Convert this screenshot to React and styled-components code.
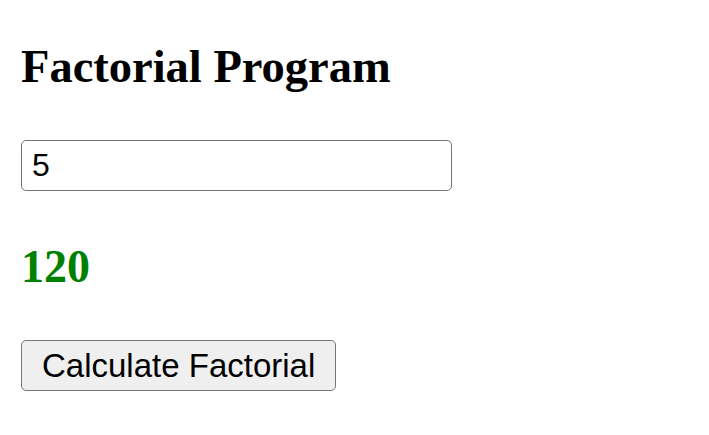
import React, { useState } from 'react'
import styled, { createGlobalStyle } from 'styled-components'

const GlobalStyle = createGlobalStyle`
  html, body {
    margin: 0;
    padding: 0;
    background: #ffffff;
  }
`

const Page = styled.div`
  display: flex;
  flex-direction: column;
  align-items: flex-start;
  padding: 43px 21px 0 21px;
  font-family: "Liberation Serif", "Times New Roman", serif;
`

const Title = styled.h1`
  margin: 0;
  font-size: 46.5px;
  line-height: 47px;
  font-weight: bold;
  color: #000;
`

const NumberInput = styled.input`
  box-sizing: border-box;
  margin-top: 50px;
  width: 431px;
  height: 51px;
  padding: 0 10px;
  border: 1px solid #767676;
  border-radius: 5px;
  font-family: "Liberation Sans", Arial, sans-serif;
  font-size: 32px;
  color: #000;
  background: #fff;
  outline: none;
`

const Result = styled.h2`
  margin: 53px 0 0 0;
  font-size: 46px;
  line-height: 46px;
  font-weight: bold;
  color: ${p => p.color || '#008000'};
`

const Button = styled.button`
  box-sizing: border-box;
  margin-top: 50px;
  height: 51px;
  padding: 0 20px;
  border: 1px solid #767676;
  border-radius: 5px;
  background: #efefef;
  font-family: "Liberation Sans", Arial, sans-serif;
  font-size: 33px;
  color: #000;
`

const factorial = n => {
  let r = 1
  for (let i = 2; i <= n; i++) r *= i
  return r
}

export default function App() {
  const [value, setValue] = useState('5')
  const [result, setResult] = useState(120)

  return (
    <>
      <GlobalStyle />
      <Page>
        <Title>Factorial Program</Title>
        <NumberInput value={value} onChange={e => setValue(e.target.value)} />
        <Result>{result}</Result>
        <Button onClick={() => setResult(factorial(parseInt(value, 10) || 0))}>
          Calculate Factorial
        </Button>
      </Page>
    </>
  )
}
